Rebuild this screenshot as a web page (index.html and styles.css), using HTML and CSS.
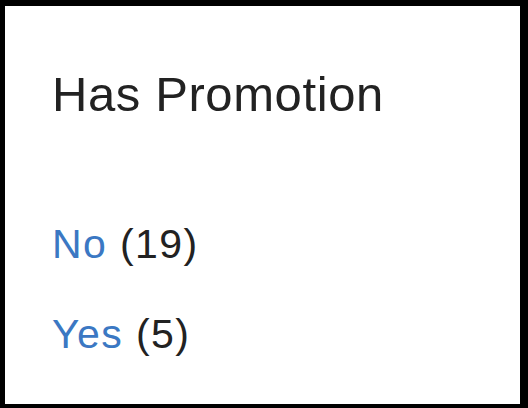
FILE: index.html
```html
<!DOCTYPE html>
<html lang="en">
<head>
    <meta charset="UTF-8">
    <meta name="viewport" content="width=device-width, initial-scale=1.0">
    <title>Has Promotion</title>
    <link rel="stylesheet" href="styles.css">
</head>
<body>
    <section class="facet">
        <h2 class="facet-title">Has Promotion</h2>
        <ul class="facet-list">
            <li class="facet-item"><a href="#">No</a> <span class="facet-count">(19)</span></li>
            <li class="facet-item"><a href="#">Yes</a> <span class="facet-count">(5)</span></li>
        </ul>
    </section>
</body>
</html>
```

FILE: styles.css
```css
*,::before,::after {
    box-sizing: border-box;
}
html, body {
    height: 100%;
}
body {
    margin: 0;
    padding: 0;
    font-family: 'Liberation Sans', Arial, sans-serif;
    color: #222;
    background-color: #000;
}
h2, ul {
    margin: 0;
}
ul {
    padding: 0;
    list-style: none;
}
a {
    text-decoration: none;
    color: #3b78c3;
}
.facet {
    height: 100%;
    background-color: #fff;
    border-style: solid;
    border-color: #000;
    border-width: 6px 8px 4px 5px;
    padding: 60px 0 0 47px;
}
.facet-title {
    font-size: 49px;
    font-weight: 400;
    line-height: 56px;
    color: #222;
    letter-spacing: .6px;
}
.facet-list {
    margin-top: 77px;
}
.facet-item {
    font-size: 41px;
    line-height: 90px;
    letter-spacing: 1.4px;
}
.facet-count {
    color: #222;
}
```
